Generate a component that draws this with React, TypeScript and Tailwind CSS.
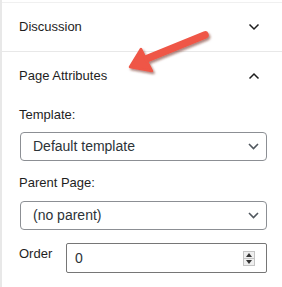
import React from "react";

function Chevron({ up = false, className = "" }: { up?: boolean; className?: string }) {
    return (
        <svg width="12" height="8" viewBox="0 0 12 8" className={className}>
            <path
                d={up ? "M1.5 6.5 L6 2 L10.5 6.5" : "M1.5 1.5 L6 6 L10.5 1.5"}
                fill="none"
                stroke="#1e1e1e"
                strokeWidth="1.5"
            />
        </svg>
    );
}

function SelectBox({ value }: { value: string }) {
    return (
        <div className="ml-[18px] flex h-[29px] w-[247px] items-center justify-between rounded-[4px] border border-[#8c8f94] pl-[12px] pr-[7px]">
            <span className="text-[14px] text-[#2c3338]">{value}</span>
            <svg width="11" height="7" viewBox="0 0 11 7">
                <path d="M1 1 L5.5 5.5 L10 1" fill="none" stroke="#50575e" strokeWidth="1.6" />
            </svg>
        </div>
    );
}

export default function App() {
    return (
        <div
            className="relative h-[287px] w-[282px] overflow-hidden border-l-2 border-[#e8e8e8] bg-white text-[#1e1e1e]"
            style={{ fontFamily: '"Liberation Sans", Arial, sans-serif' }}
        >
            <div className="mt-[2px] border-t border-[#f0f0f0]" />

            {/* Discussion panel header */}
            <div className="flex h-[48px] items-center justify-between pl-[17px] pr-[22px]">
                <span className="text-[13px]">Discussion</span>
                <Chevron />
            </div>

            <div className="border-t border-[#e8e8e8]" />

            {/* Page Attributes panel */}
            <div className="flex h-[48px] items-center justify-between pl-[17px] pr-[22px]">
                <span className="text-[13px]">Page Attributes</span>
                <Chevron up />
            </div>

            <div className="flex flex-col">
                <label className="mt-[7px] pl-[17px] text-[13px] leading-[16px]">Template:</label>
                <div className="mt-[9px]">
                    <SelectBox value="Default template" />
                </div>

                <label className="mt-[14px] pl-[17px] text-[13px] leading-[16px]">Parent Page:</label>
                <div className="mt-[10px]">
                    <SelectBox value="(no parent)" />
                </div>

                <div className="mt-[13px] flex items-start pl-[17px]">
                    <span className="mt-[3px] w-[47px] text-[13px] leading-[16px]">Order</span>
                    <div className="flex h-[30px] w-[201px] items-center justify-between rounded-[2px] border border-[#767676] pl-[8px] pr-[11px]">
                        <span className="text-[14px] text-[#2c3338]">0</span>
                        <div className="flex h-[15px] w-[12px] flex-col border border-[#c4c4c4] bg-[#efefef]">
                            <div className="flex flex-1 items-center justify-center border-b border-[#c4c4c4]">
                                <svg width="6" height="4" viewBox="0 0 6 4">
                                    <path d="M0 4 L3 0 L6 4 Z" fill="#333" />
                                </svg>
                            </div>
                            <div className="flex flex-1 items-center justify-center">
                                <svg width="6" height="4" viewBox="0 0 6 4">
                                    <path d="M0 0 L3 4 L6 0 Z" fill="#333" />
                                </svg>
                            </div>
                        </div>
                    </div>
                </div>
            </div>

            {/* Annotation arrow */}
            <svg
                className="pointer-events-none absolute left-[-2px] top-0"
                width="282"
                height="287"
                viewBox="0 0 282 287"
            >
                <defs>
                    <filter id="shadow" x="-20%" y="-20%" width="140%" height="160%">
                        <feDropShadow dx="1.5" dy="2" stdDeviation="1.2" floodColor="#6b1d14" floodOpacity="0.55" />
                    </filter>
                </defs>
                <g filter="url(#shadow)">
                    <line x1="205" y1="35" x2="146" y2="59" stroke="#ef5646" strokeWidth="7.5" strokeLinecap="round" />
                    <path d="M130 67 L141 49 Q146 60 152 71 Z" fill="#ef5646" stroke="#ef5646" strokeWidth="2.5" strokeLinejoin="round" />
                </g>
            </svg>
        </div>
    );
}
